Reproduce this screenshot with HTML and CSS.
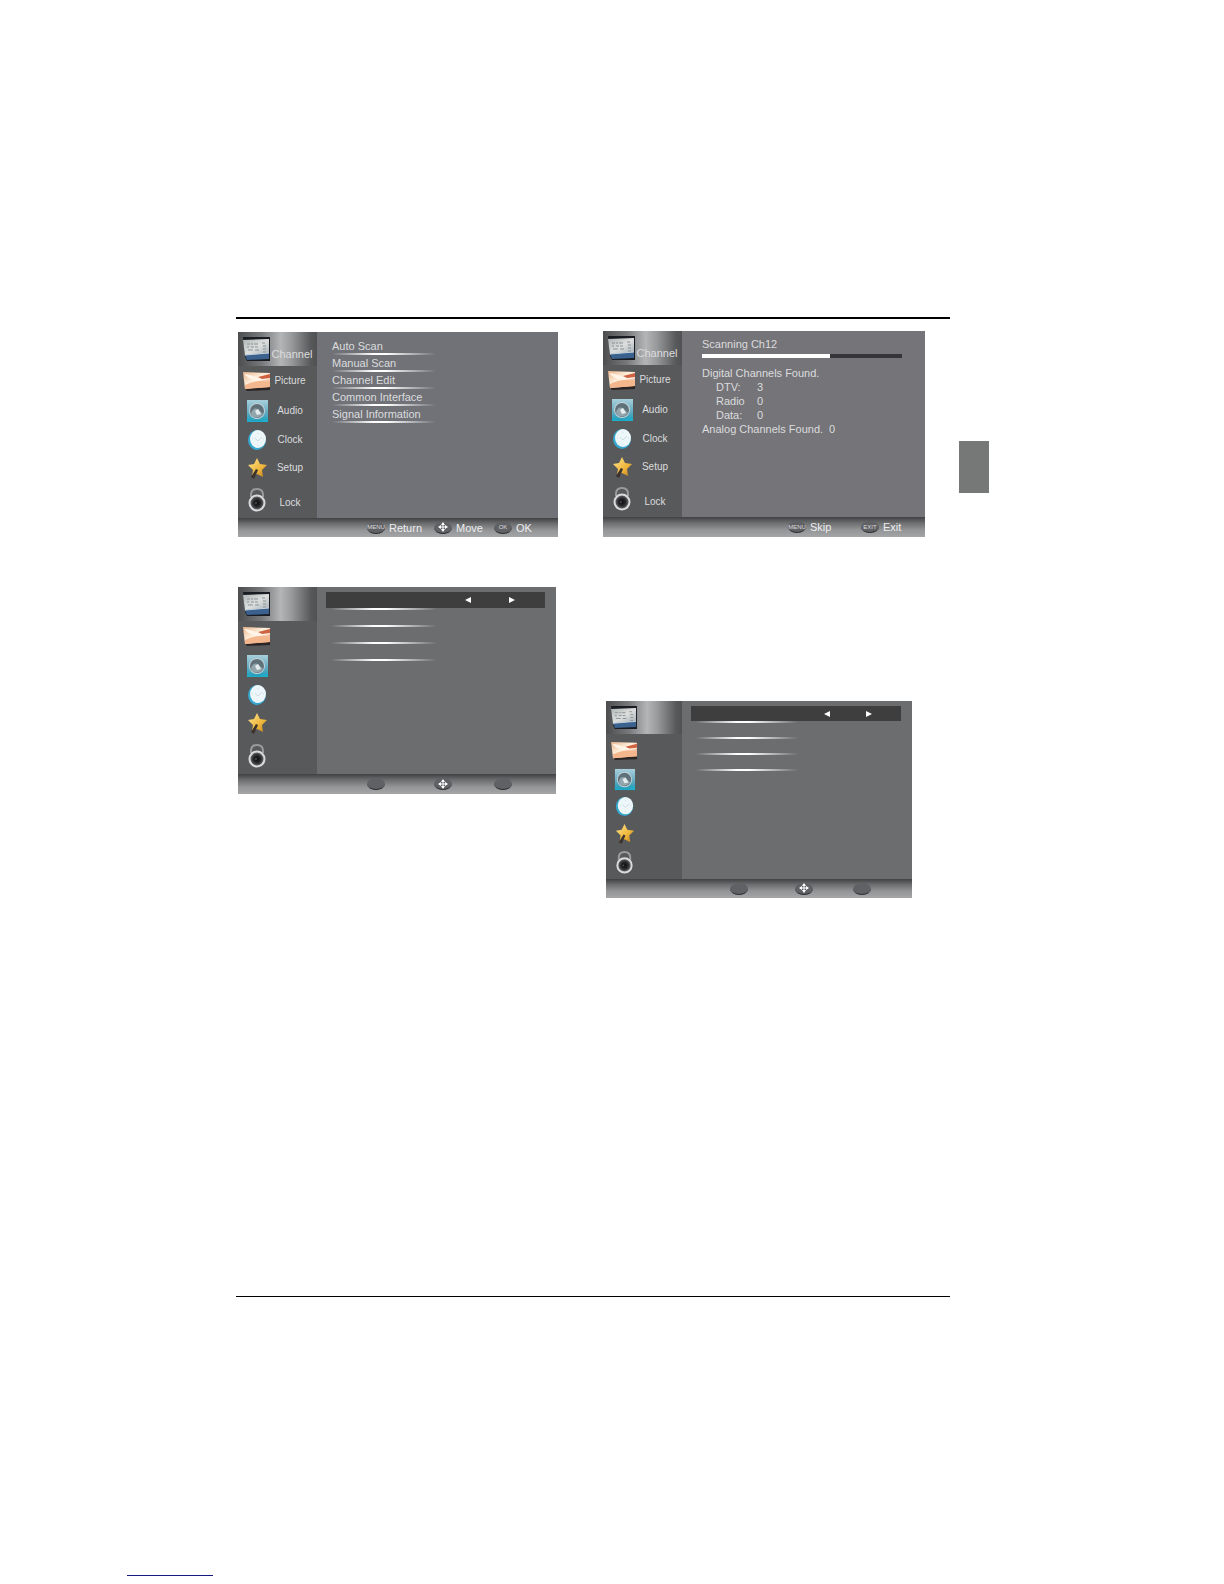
FILE: index.html
```html
<!DOCTYPE html>
<html lang="en">
<head>
<meta charset="utf-8">
<meta name="viewport" content="width=device-width, initial-scale=1">
<title>Channel menu</title>
<link rel="stylesheet" href="styles.css">
</head>
<body>
<svg class="sprite" aria-hidden="true">
  <defs>
    <linearGradient id="g-screen" x2="1" y2="1"><stop offset="0" stop-color="#aeb5b6"/><stop offset=".5" stop-color="#dcdfdd"/><stop offset="1" stop-color="#a5afb7"/></linearGradient>
    <linearGradient id="g-photo" x2="1" y2="1"><stop offset="0" stop-color="#e9b48a"/><stop offset=".45" stop-color="#fff0dd"/><stop offset="1" stop-color="#e99467"/></linearGradient>
    <linearGradient id="g-audio" x2="0" y2="1"><stop offset="0" stop-color="#a8cfdb"/><stop offset=".6" stop-color="#5fa9c0"/><stop offset="1" stop-color="#169fbd"/></linearGradient>
    <radialGradient id="g-cone"><stop offset="0" stop-color="#f5f8f9"/><stop offset=".35" stop-color="#65747c"/><stop offset=".75" stop-color="#8c9da5"/><stop offset="1" stop-color="#d9e3e6"/></radialGradient>
    <linearGradient id="g-star" x2="1" y2="1"><stop offset="0" stop-color="#ffe58d"/><stop offset=".6" stop-color="#eeb63c"/><stop offset="1" stop-color="#bf7b1d"/></linearGradient>
    <radialGradient id="g-eye"><stop offset="0" stop-color="#0b0b0d"/><stop offset=".5" stop-color="#29292c"/><stop offset="1" stop-color="#77787b"/></radialGradient>
  </defs>
  <symbol id="i-channel" viewBox="0 0 28 24">
    <path d="M0 0H27V24H4L2 20Z" fill="#191c22"/>
    <path d="M0 3 26 2V17L2 19Z" fill="url(#g-screen)"/>
    <path d="M2 18 26 16V22L4 23Z" fill="#3b618f"/>
    <path d="M4 7h3m1 0h2m1 0h4M4 10h2m2 0h3m1 0h3M5 13h5m2 0h4M19 6h3m-2 3h3m-3 3h3m-3 3h3" stroke="#8b9395" fill="none"/>
    <path d="M2 18 26 16" stroke="#c5d2dc"/>
  </symbol>
  <symbol id="i-picture" viewBox="0 0 28 24">
    <path d="M2 19 27 18V21L4 22Z" fill="#2b2425"/>
    <path d="M0 3 27 4V18L2 20Z" fill="url(#g-photo)"/>
    <path d="M1 5C9 6 13 8 16 9L27 5V10L15 12C9 11 6 10 1 5Z" fill="#fff4e7"/>
    <path d="M15 8 27 5V9L19 10Z" fill="#cf6241"/>
    <path d="M2 16Q14 10 27 13V18L2 20Z" fill="#f4b78d"/>
  </symbol>
  <symbol id="i-audio" viewBox="0 0 28 24">
    <path d="M4 1H25V23H4Z" fill="url(#g-audio)"/>
    <circle cx="14" cy="12" r="8" fill="#c3d3d9"/>
    <circle cx="14" cy="12" r="7" fill="#60717a"/>
    <path d="M8 14Q10 8 15 10L20 15Q15 21 9 17Z" fill="#93a6ae"/>
    <path d="m12 12 3-2 3 5-4 1Z" fill="#e5ecee"/>
    <path d="M4 20Q14 25 25 19V23H4Z" fill="#1fadc9"/>
  </symbol>
  <symbol id="i-clock" viewBox="0 0 28 24">
    <ellipse cx="14" cy="12" rx="9" ry="10" fill="#35a6ce"/>
    <ellipse cx="15" cy="11" rx="8" ry="9" fill="#edf7fa"/>
    <path d="m12 10 3 3 4-4m-4-4v1m0 11v1m-6-7h1m10 0h1" stroke="#cbdbe2" fill="none"/>
  </symbol>
  <symbol id="i-setup" viewBox="0 0 28 24">
    <path d="m14 2 3 6 7 1-5 5 1 7-6-3-5 2 1-6-5-5 6-1Z" fill="url(#g-star)"/>
    <path d="m13 13-5 8 3 2 4-9Z" fill="#39322e"/>
  </symbol>
  <symbol id="i-lock" viewBox="0 0 28 24">
    <path d="M8 9V7Q8 1 14 1T20 7V9" fill="none" stroke="#9a9b9d" stroke-width="2"/>
    <circle cx="14" cy="15" r="7.500" fill="url(#g-eye)" stroke="#d9dadb" stroke-width="2"/>
    <circle cx="13" cy="15" r="1" fill="#4c4e51"/>
  </symbol>
  <symbol id="i-move" viewBox="0 0 10 10"><path d="M5 1V9M1 5H9" stroke="#fff"/><path d="M5 0 7 3H3ZM5 10 7 7H3ZM0 5 3 3V7ZM10 5 7 3V7Z" fill="#fff"/></symbol>
  <symbol id="i-left" viewBox="0 0 6 6"><path d="M6 0V6L0 3Z" fill="#fff"/></symbol>
  <symbol id="i-right" viewBox="0 0 6 6"><path d="M0 0V6L6 3Z" fill="#fff"/></symbol>
</svg>

<div class="page">
  <div class="sheet">
    <main class="content">
      <div class="columns">
        <div class="column column-left">
          <section class="osd osd-menu" aria-label="Channel menu">
            <nav class="sidebar">
              <a class="tab active" href="#channel"><svg><use href="#i-channel"/></svg><span>Channel</span></a>
              <a class="tab" href="#picture"><svg><use href="#i-picture"/></svg><span>Picture</span></a>
              <a class="tab" href="#audio"><svg><use href="#i-audio"/></svg><span>Audio</span></a>
              <a class="tab" href="#clock"><svg><use href="#i-clock"/></svg><span>Clock</span></a>
              <a class="tab" href="#setup"><svg><use href="#i-setup"/></svg><span>Setup</span></a>
              <a class="tab" href="#lock"><svg><use href="#i-lock"/></svg><span>Lock</span></a>
            </nav>
            <ul class="pane menu">
              <li>Auto Scan</li>
              <li>Manual Scan</li>
              <li>Channel Edit</li>
              <li>Common Interface</li>
              <li>Signal Information</li>
            </ul>
            <footer class="keys">
              <span class="hint"><button type="button">MENU</button>Return</span>
              <span class="hint"><button type="button" aria-label="Arrows"><svg><use href="#i-move"/></svg></button>Move</span>
              <span class="hint"><button type="button">OK</button>OK</span>
            </footer>
          </section>

          <section class="osd osd-options" aria-label="Channel options">
            <nav class="sidebar">
              <a class="tab active" href="#channel" aria-label="Channel"><svg><use href="#i-channel"/></svg></a>
              <a class="tab" href="#picture" aria-label="Picture"><svg><use href="#i-picture"/></svg></a>
              <a class="tab" href="#audio" aria-label="Audio"><svg><use href="#i-audio"/></svg></a>
              <a class="tab" href="#clock" aria-label="Clock"><svg><use href="#i-clock"/></svg></a>
              <a class="tab" href="#setup" aria-label="Setup"><svg><use href="#i-setup"/></svg></a>
              <a class="tab" href="#lock" aria-label="Lock"><svg><use href="#i-lock"/></svg></a>
            </nav>
            <div class="pane options">
              <div class="selector">
                <button type="button" aria-label="Previous"><svg><use href="#i-left"/></svg></button>
                <button type="button" aria-label="Next"><svg><use href="#i-right"/></svg></button>
              </div>
              <ul class="lines"><li></li><li></li><li></li><li></li></ul>
            </div>
            <footer class="keys">
              <span class="hint"><button type="button" aria-label="Menu"></button></span>
              <span class="hint"><button type="button" aria-label="Arrows"><svg><use href="#i-move"/></svg></button></span>
              <span class="hint"><button type="button" aria-label="OK"></button></span>
            </footer>
          </section>
        </div>

        <div class="column column-right">
          <section class="osd osd-scan" aria-label="Channel scan">
            <nav class="sidebar">
              <a class="tab active" href="#channel"><svg><use href="#i-channel"/></svg><span>Channel</span></a>
              <a class="tab" href="#picture"><svg><use href="#i-picture"/></svg><span>Picture</span></a>
              <a class="tab" href="#audio"><svg><use href="#i-audio"/></svg><span>Audio</span></a>
              <a class="tab" href="#clock"><svg><use href="#i-clock"/></svg><span>Clock</span></a>
              <a class="tab" href="#setup"><svg><use href="#i-setup"/></svg><span>Setup</span></a>
              <a class="tab" href="#lock"><svg><use href="#i-lock"/></svg><span>Lock</span></a>
            </nav>
            <div class="pane scan">
              <label for="scan-progress">Scanning Ch12</label>
              <progress id="scan-progress" max="100" value="64"></progress>
              <p>Digital Channels Found.</p>
              <dl>
                <dt>DTV:</dt><dd>3</dd>
                <dt>Radio</dt><dd>0</dd>
                <dt>Data:</dt><dd>0</dd>
              </dl>
              <p class="analog"><span>Analog Channels Found.</span><span>0</span></p>
            </div>
            <footer class="keys">
              <span class="hint"><button type="button">MENU</button>Skip</span>
              <span class="hint"><button type="button">EXIT</button>Exit</span>
            </footer>
          </section>

          <section class="osd osd-small" aria-label="Channel options">
            <nav class="sidebar">
              <a class="tab active" href="#channel" aria-label="Channel"><svg><use href="#i-channel"/></svg></a>
              <a class="tab" href="#picture" aria-label="Picture"><svg><use href="#i-picture"/></svg></a>
              <a class="tab" href="#audio" aria-label="Audio"><svg><use href="#i-audio"/></svg></a>
              <a class="tab" href="#clock" aria-label="Clock"><svg><use href="#i-clock"/></svg></a>
              <a class="tab" href="#setup" aria-label="Setup"><svg><use href="#i-setup"/></svg></a>
              <a class="tab" href="#lock" aria-label="Lock"><svg><use href="#i-lock"/></svg></a>
            </nav>
            <div class="pane options">
              <div class="selector">
                <button type="button" aria-label="Previous"><svg><use href="#i-left"/></svg></button>
                <button type="button" aria-label="Next"><svg><use href="#i-right"/></svg></button>
              </div>
              <ul class="lines"><li></li><li></li><li></li><li></li></ul>
            </div>
            <footer class="keys">
              <span class="hint"><button type="button" aria-label="Menu"></button></span>
              <span class="hint"><button type="button" aria-label="Arrows"><svg><use href="#i-move"/></svg></button></span>
              <span class="hint"><button type="button" aria-label="OK"></button></span>
            </footer>
          </section>
        </div>
      </div>
    </main>
    <aside class="thumb-tab"></aside>
  </div>
  <hr class="link-rule">
</div>
</body>
</html>
```
FILE: styles.css
```css
* { box-sizing: border-box; }

body {
  margin: 0;
  background: #fff;
  font: 11px/14px "Liberation Sans", Arial, sans-serif;
}

ul, dl, dd, p { margin: 0; padding: 0; list-style: none; }
svg { display: block; }
.sprite { position: absolute; width: 0; height: 0; }

.page {
  display: flex;
  flex-direction: column;
  min-height: 100vh;
  padding-top: 317px;
}

.sheet {
  display: grid;
  grid-template-columns: 1fr 30px;
  column-gap: 9px;
  flex: 1;
  margin: 0 235px 0 236px;
}

.content {
  border-top: 2px solid #000;
  border-bottom: 1px solid #000;
}

.thumb-tab {
  height: 52px;
  margin-top: 124px;
  background: #767878;
}

.link-rule {
  width: 86px;
  height: 1px;
  margin: 278px 0 8px 127px;
  border: 0;
  background: #171780;
}

.columns {
  display: grid;
  grid-template-columns: 320fr 322fr;
  column-gap: 45px;
  padding: 12px 25px 0 2px;
}

.column { display: flex; flex-direction: column; }
.column-left { gap: 50px; padding-top: 1px; }
.column-right { gap: 164px; }

/* On-screen menu panel */
.osd {
  --rows: 34px 30px 30px 28px 28px 37px;
  display: grid;
  grid-template-columns: 79px 1fr;
  grid-template-rows: auto 20px;
  background: #6c6d6f;
  color: #dbdcde;
}

.osd-menu, .osd-scan { --rows: 34px 30px 30px 28px 28px 36px; }
.osd-menu { grid-template-rows: auto 19px; background: #707277; }
.osd-scan { background: #757478; }
.osd-options { margin-right: 2px; }

.osd-small {
  --rows: 33px 32px 26px 28px 26px 33px;
  grid-template-columns: 76px 1fr;
  grid-template-rows: auto 19px;
  margin: 0 13px 0 3px;
}

.sidebar {
  display: grid;
  grid-template-rows: var(--rows);
  background: #58595b;
}

.tab {
  display: flex;
  align-items: center;
  padding: 0 8px 0 5px;
  color: inherit;
  font-size: 10px;
  text-decoration: none;
}

.tab svg { width: 28px; height: 24px; }
.tab span { flex: 1; text-align: center; }
.tab:last-child span { padding-top: 6px; }

.tab.active {
  padding-right: 4px;
  background: linear-gradient(90deg, #4c4d4f 0%, #77787a 30%, #b4b5b7 54%, #98999b 68%, #58595b 92%, #505153 100%);
  font-size: 11px;
}
.tab.active span { padding-top: 10px; }

.osd-small .tab svg { width: 27px; height: 23px; }

.menu { padding: 6px 15px 0; }
.menu li { height: 17px; line-height: 17px; }
.menu li::after, .lines li {
  background: linear-gradient(90deg, transparent, #fff 40%, #fff 52%, transparent);
}
.menu li::after {
  content: "";
  display: block;
  width: 104px;
  height: 2px;
  margin-top: -2px;
}

.options { padding: 5px 11px 0 9px; }

.selector {
  display: flex;
  align-items: center;
  justify-content: flex-end;
  gap: 38px;
  height: 16px;
  padding-right: 30px;
  background: #3e3e3f;
}
.selector button { padding: 0; border: 0; background: none; }
.selector svg { width: 6px; height: 6px; }

.lines li {
  width: 106px;
  height: 2px;
  margin: 0 0 15px 5px;
}
.osd-small .lines li { width: 102px; margin-bottom: 14px; }
.osd-small .selector { height: 15px; gap: 36px; padding-right: 29px; }

.scan { padding: 6px 23px 0 20px; }
.scan label { display: block; }
.scan progress {
  display: block;
  width: 100%;
  height: 4px;
  margin: 3px 0 8px;
  border: 0;
  background: #353538;
  appearance: none;
}
.scan progress::-webkit-progress-bar { background: #353538; }
.scan progress::-webkit-progress-value { background: #fff; }
.scan dl {
  display: grid;
  grid-template-columns: 41px auto;
  padding-left: 14px;
}
.analog { display: flex; gap: 6px; }

.keys {
  display: grid;
  grid-template-columns: 67px 60px 1fr;
  grid-column: 1 / -1;
  padding-left: 129px;
  background: linear-gradient(#414143, #6d6e70 30%, #939597 65%, #a3a5a7);
  color: #eeeeef;
}
.osd-scan .keys { grid-template-columns: 73px 1fr; padding-left: 185px; }
.osd-small .keys { grid-template-columns: 65px 58px 1fr; padding-left: 124px; }

.hint { display: flex; align-items: center; gap: 4px; }
.hint button {
  display: grid;
  place-items: center;
  width: 18px;
  height: 12px;
  padding: 0;
  border: 0;
  border-bottom: 1px solid #2c2c2e;
  border-radius: 50%;
  background: #606164;
  color: #dddddf;
  font: 6px/8px "Liberation Sans", Arial, sans-serif;
}
.hint svg { width: 10px; height: 10px; }
```
